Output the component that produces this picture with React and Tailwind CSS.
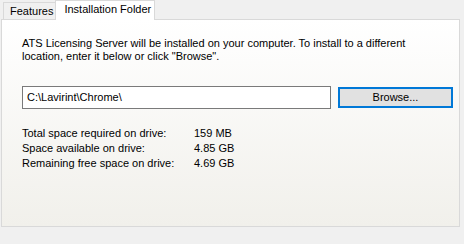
export default function App() {
  const rows = [
    ["Total space required on drive:", "159 MB"],
    ["Space available on drive:", "4.85 GB"],
    ["Remaining free space on drive:", "4.69 GB"],
  ];

  return (
    <div
      className="w-[464px] h-[244px] overflow-hidden bg-[#f0f0f0] text-[11px] text-black pl-[1px]"
      style={{ fontFamily: '"Liberation Sans", Arial, sans-serif' }}
    >
      <div className="flex items-end h-[19px] pl-[2px]">
        <div className="h-[17px] pl-[6px] pr-[2px] border border-b-0 border-r-0 border-[#d9d9d9] bg-[#f0f0f0] leading-[16px]">
          Features
        </div>
        <div className="relative z-10 h-[20px] -mb-px pl-[8px] pr-[3px] border border-b-0 border-[#d9d9d9] bg-white leading-[16px]">
          Installation Folder
        </div>
      </div>
      <div className="w-[459px] h-[208px] border border-[#d9d9d9] bg-gradient-to-b from-white to-[#f1f0eb] pl-[20px] pt-[17px]">
        <p className="leading-[13px] w-[400px]">
          ATS Licensing Server will be installed on your computer. To install to a different location, enter it below or click "Browse".
        </p>
        <div className="flex items-center mt-[23px] gap-[7px]">
          <div className="w-[309px] h-[23px] border border-[#7a7a7a] bg-white pl-[4px] leading-[21px]">
            C:\Lavirint\Chrome\
          </div>
          <button className="w-[115px] h-[21px] border-2 border-[#0078d7] bg-[#e1e1e1] leading-[17px]">
            Browse...
          </button>
        </div>
        <div className="mt-[17px]">
          {rows.map(([label, value]) => (
            <div key={label} className="flex leading-[15px]">
              <span className="w-[172px]">{label}</span>
              <span>{value}</span>
            </div>
          ))}
        </div>
      </div>
    </div>
  );
}
